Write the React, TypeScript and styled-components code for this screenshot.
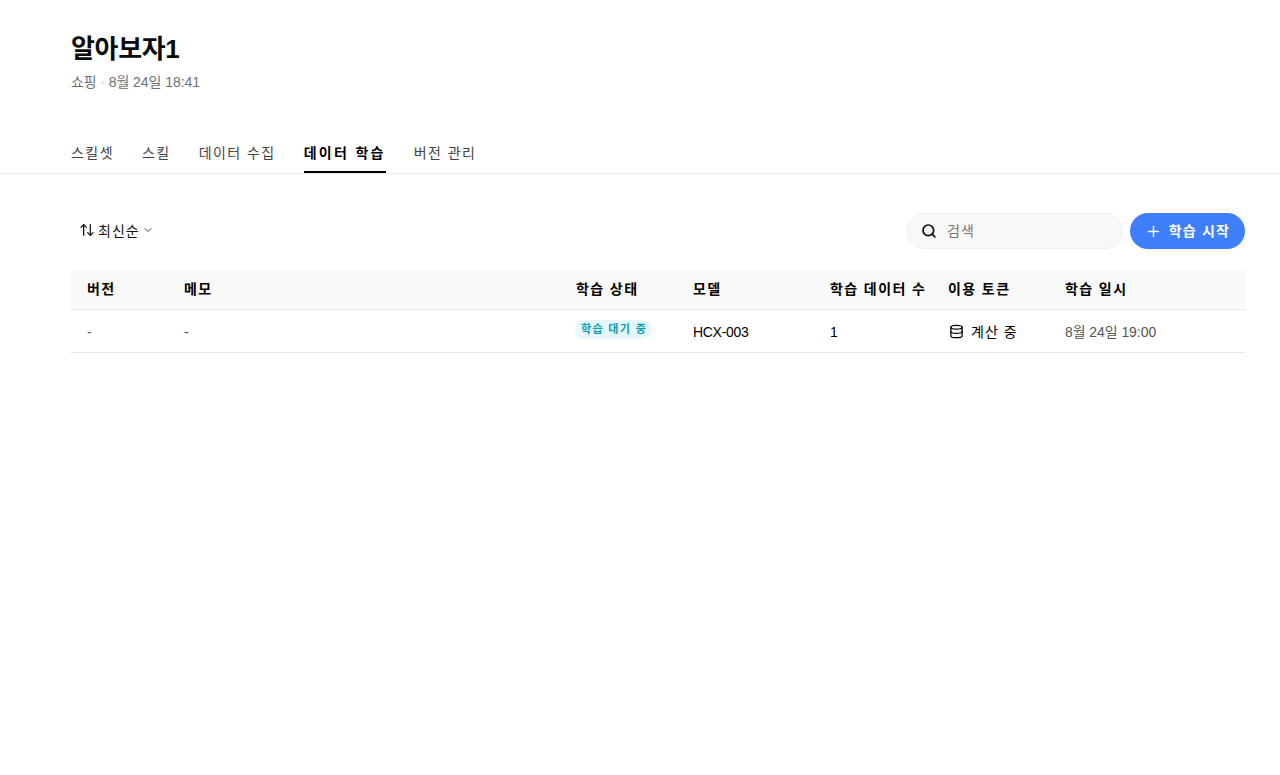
import { Database, Plus, Search, ChevronDown, ArrowUpDown } from "lucide-react";
import styled, { createGlobalStyle } from "styled-components";

const GlobalStyle = createGlobalStyle`
    * {
        box-sizing: border-box;
    }
    body {
        margin: 0;
        background-color: #FFFFFF;
        color: #000000;
        font-family: "Liberation Sans", "Noto Sans CJK KR", sans-serif;
    }
`

const Header = styled.header`
    padding: 30px 35px 0 71px;
    height: 134px;

    h1 {
        margin: 0;
        font-size: 26px;
        font-weight: 700;
        line-height: 38px;
        letter-spacing: -0.35px;
        color: #0B0B0B;
    }
    p {
        margin: 4px 0 0;
        font-size: 14px;
        line-height: 20px;
        letter-spacing: -0.05px;
        color: #6B7078;
        display: flex;
        align-items: center;
    }
    i {
        width: 3px;
        height: 3px;
        margin: 0 5px 0 4px;
        border-radius: 50%;
        background-color: #DDDFE2;
    }
`

const Tabs = styled.nav`
    height: 40px;
    padding-left: 71px;
    display: flex;
    gap: 28px;
    border-bottom: 1px solid #E8E8E8;
`

const Tab = styled.div<{ $active?: boolean }>`
    height: 39px;
    font-size: 14px;
    line-height: 38px;
    letter-spacing: ${(p) => (p.$active ? "2.3px" : "1.45px")};
    font-weight: ${(p) => (p.$active ? 700 : 400)};
    color: ${(p) => (p.$active ? "#000000" : "#444444")};
    border-bottom: 2px solid ${(p) => (p.$active ? "#000000" : "transparent")};
`

const Content = styled.main`
    padding: 39px 35px 0 71px;
`

const Toolbar = styled.div`
    height: 36px;
    margin-bottom: 21px;
    display: flex;
    justify-content: space-between;
    align-items: center;
`

const SortButton = styled.div`
    margin-left: 8px;
    padding-bottom: 2px;
    display: flex;
    align-items: center;
    font-size: 14px;
    letter-spacing: 1px;
    color: #111111;

    svg:first-child {
        margin-right: 3px;
    }
    svg:last-child {
        margin-left: 2px;
        color: #444444;
    }
`

const Actions = styled.div`
    display: flex;
    gap: 7px;
`

const SearchBox = styled.div`
    width: 216px;
    height: 36px;
    padding: 0 0 2px 13px;
    display: flex;
    align-items: center;
    gap: 10px;
    background-color: #F8F8F8;
    border: 1px solid #EEEEEE;
    border-radius: 18px;
    font-size: 14px;
    letter-spacing: 1px;
    color: #777777;

    svg {
        margin-top: 2px;
        color: #111111;
    }
`

const StartButton = styled.div`
    width: 115px;
    height: 36px;
    padding-bottom: 2px;
    display: flex;
    justify-content: center;
    align-items: center;
    gap: 7px;
    background-color: #3F7FFB;
    border-radius: 18px;
    font-size: 14px;
    font-weight: 700;
    letter-spacing: 1.2px;
    color: #FFFFFF;

    svg {
        margin-top: 2px;
    }
`

const Row = styled.div<{ $head?: boolean }>`
    display: grid;
    grid-template-columns: 97px 392px 117px 137px 118px 117px 1fr;
    align-items: center;
    height: ${(p) => (p.$head ? "40px" : "43px")};
    padding-bottom: ${(p) => (p.$head ? "3px" : "0")};
    background-color: ${(p) => (p.$head ? "#F9F9F9" : "#FFFFFF")};
    border-bottom: 1px solid #E8E8E8;
    font-size: 14px;
    font-weight: ${(p) => (p.$head ? 700 : 400)};
    letter-spacing: ${(p) => (p.$head ? "1.4px" : "0")};
    color: #000000;
`

const Cell = styled.div<{ $muted?: boolean }>`
    padding-left: 16px;
    white-space: nowrap;
    color: ${(p) => (p.$muted ? "#555555" : "inherit")};
`

const Dash = styled(Cell)`
    padding-top: 1px;
`

const ModelCell = styled(Cell)`
    padding-top: 1px;
    letter-spacing: -0.3px;
`

const DateCell = styled(Cell)`
    padding-bottom: 1px;
    letter-spacing: -0.07px;
`

const Badge = styled.span`
    display: inline-block;
    height: 19px;
    margin: 0 0 3px -1px;
    padding: 0 5px 0 6px;
    border-radius: 10px;
    background-color: #E6F7FB;
    color: #0A9DB8;
    font-size: 11px;
    font-weight: 700;
    line-height: 18px;
    letter-spacing: 1.35px;
    vertical-align: middle;
`

const Token = styled.div`
    display: flex;
    align-items: center;
    gap: 7px;
    letter-spacing: 1px;

    svg {
        margin-left: 1px;
    }
`

const App = () => {
    return (
        <>
            <GlobalStyle />
            <Header>
                <h1>알아보자1</h1>
                <p>쇼핑<i />8월 24일 18:41</p>
            </Header>
            <Tabs>
                <Tab>스킬셋</Tab>
                <Tab>스킬</Tab>
                <Tab>데이터 수집</Tab>
                <Tab $active>데이터 학습</Tab>
                <Tab>버전 관리</Tab>
            </Tabs>
            <Content>
                <Toolbar>
                    <SortButton>
                        <ArrowUpDown size={16} strokeWidth={1.9} />
                        최신순
                        <ChevronDown size={12} />
                    </SortButton>
                    <Actions>
                        <SearchBox>
                            <Search size={16} strokeWidth={2.6} />
                            검색
                        </SearchBox>
                        <StartButton>
                            <Plus size={17} />
                            학습 시작
                        </StartButton>
                    </Actions>
                </Toolbar>
                <Row $head>
                    <Cell>버전</Cell>
                    <Cell>메모</Cell>
                    <Cell>학습 상태</Cell>
                    <Cell>모델</Cell>
                    <Cell>학습 데이터 수</Cell>
                    <Cell>이용 토큰</Cell>
                    <Cell>학습 일시</Cell>
                </Row>
                <Row>
                    <Dash $muted>-</Dash>
                    <Dash $muted>-</Dash>
                    <Cell><Badge>학습 대기 중</Badge></Cell>
                    <ModelCell>HCX-003</ModelCell>
                    <ModelCell>1</ModelCell>
                    <Cell>
                        <Token>
                            <Database size={15} />
                            계산 중
                        </Token>
                    </Cell>
                    <DateCell $muted>8월 24일 19:00</DateCell>
                </Row>
            </Content>
        </>
    )
}

export default App;
